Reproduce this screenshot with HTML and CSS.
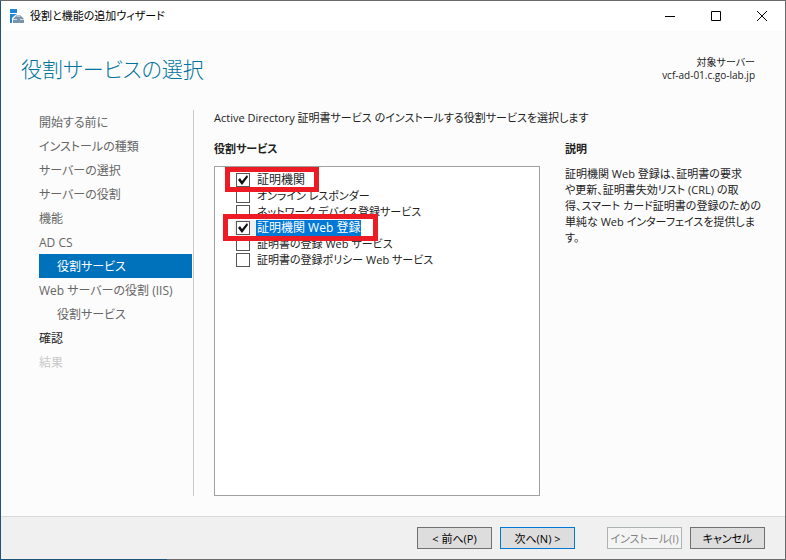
FILE: index.html
```html
<!DOCTYPE html>
<html lang="ja">
<head>
    <meta charset="UTF-8">
    <meta name="viewport" content="width=device-width, initial-scale=1.0">
    <title>役割と機能の追加ウィザード</title>
    <link rel="stylesheet" href="styles.css">
</head>
<body>
    <div class="window">
        <div class="titlebar">
            <svg class="app-icon" width="16" height="16" viewBox="0 0 16 16" aria-hidden="true">
                <path d="M1 1h7v4H1zM1 6h7L5 8 3 10v5H1z" fill="#1e88d8"/>
                <path d="M7 10V8h5v2" fill="none" stroke="#6d8ba3"/>
                <path d="M4 11l2-2h7l2 2v4H4z" fill="#7895ab"/>
                <path d="M4 11.5h4m3 0h4" stroke="#d5dee6"/>
            </svg>
            <span class="title">役割と機能の追加ウィザード</span>
            <div class="window-controls">
                <button type="button" aria-label="最小化">
                    <svg width="10" height="10" viewBox="0 0 10 10"><path d="M0 5.5h10" stroke="#000"/></svg>
                </button>
                <button type="button" aria-label="最大化">
                    <svg width="10" height="10" viewBox="0 0 10 10"><path d="M.5.5h9v9h-9z" fill="none" stroke="#000"/></svg>
                </button>
                <button type="button" aria-label="閉じる">
                    <svg width="10" height="10" viewBox="0 0 10 10"><path d="M0 0l10 10M10 0L0 10" stroke="#000"/></svg>
                </button>
            </div>
        </div>

        <header class="page-header">
            <h1>役割サービスの選択</h1>
            <div class="target">対象サーバー<br>vcf-ad-01.c.go-lab.jp</div>
        </header>

        <div class="content">
            <nav class="steps">
                <a href="#">開始する前に</a>
                <a href="#">インストールの種類</a>
                <a href="#">サーバーの選択</a>
                <a href="#">サーバーの役割</a>
                <a href="#">機能</a>
                <a href="#">AD CS</a>
                <a href="#" class="sub current">役割サービス</a>
                <a href="#">Web サーバーの役割 (IIS)</a>
                <a href="#" class="sub">役割サービス</a>
                <a href="#" class="next">確認</a>
                <a class="disabled">結果</a>
            </nav>

            <main class="main">
                <p class="intro">Active Directory 証明書サービス のインストールする役割サービスを選択します</p>
                <div class="columns">
                    <section class="roles">
                        <h2>役割サービス</h2>
                        <div class="role-list">
                            <label class="role"><input type="checkbox" checked><span>証明機関</span></label>
                            <label class="role"><input type="checkbox"><span>オンライン レスポンダー</span></label>
                            <label class="role"><input type="checkbox"><span>ネットワーク デバイス登録サービス</span></label>
                            <label class="role selected"><input type="checkbox" checked><span>証明機関 Web 登録</span></label>
                            <label class="role"><input type="checkbox"><span>証明書の登録 Web サービス</span></label>
                            <label class="role"><input type="checkbox"><span>証明書の登録ポリシー Web サービス</span></label>
                            <div class="marker marker-ca"></div>
                            <div class="marker marker-web"></div>
                        </div>
                    </section>
                    <section class="description">
                        <h2>説明</h2>
                        <p>証明機関 Web 登録は、証明書の要求<br>や更新、証明書失効リスト (CRL) の取<br>得、スマート カード証明書の登録のための<br>単純な Web インターフェイスを提供しま<br>す。</p>
                    </section>
                </div>
            </main>
        </div>

        <footer class="footer">
            <button type="button" class="btn">&lt; 前へ(P)</button>
            <button type="button" class="btn btn-default">次へ(N) &gt;</button>
            <button type="button" class="btn btn-install" disabled>インストール(I)</button>
            <button type="button" class="btn">キャンセル</button>
        </footer>
    </div>
</body>
</html>
```

FILE: styles.css
```css
* {
    box-sizing: border-box;
}

body {
    margin: 0;
    font-family: "Open Sans", "Noto Sans CJK JP", sans-serif;
    font-size: 12px;
    line-height: 16px;
    font-feature-settings: "palt";
    color: #222;
}

button {
    font: inherit;
    font-feature-settings: inherit;
}

h1, h2, p {
    margin: 0;
}

/* 1px window edge, drawn by the background */
.window {
    display: flex;
    flex-direction: column;
    min-height: 100vh;
    padding: 0 1px 1px;
    border-top: 1px solid #6b696b;
    background: linear-gradient(to right, #1b5577 167px, #6b696b 167px);
}

.titlebar {
    display: flex;
    align-items: center;
    height: 30px;
    padding-left: 8px;
    background: #fff;
    color: #000;
}

.title {
    flex: 1;
    margin-left: 5px;
    font-size: 11px;
    white-space: nowrap;
}

.window-controls {
    display: flex;
}

.window-controls button {
    display: flex;
    align-items: center;
    justify-content: center;
    width: 46px;
    height: 30px;
    padding: 0;
    border: none;
    background: none;
}

.page-header {
    display: flex;
    justify-content: space-between;
    height: 79px;
    padding: 22px 30px 0 20px;
    background: #fcfcfc;
}

h1 {
    font-size: 21px;
    line-height: 32px;
    font-weight: 300;
    color: #00739c;
}

.target {
    padding-top: 3px;
    font-size: 10px;
    line-height: 13px;
    text-align: right;
}

.content {
    display: flex;
    flex: 1;
    padding: 0 19px 20px 38px;
    background: #fcfcfc;
}

.steps {
    width: 155px;
    flex-shrink: 0;
    padding-right: 1px;
    border-right: 1px solid #c8c8c8;
    line-height: 22px;
}

.steps a {
    display: block;
    padding-top: 2px;
    color: #666;
    text-decoration: none;
    white-space: nowrap;
}

.steps .sub {
    padding-left: 18px;
}

.steps .current {
    background: #0072bc;
    color: #fff;
}

.steps .next {
    color: #222;
}

.steps .disabled {
    color: #c8c8c8;
}

.main {
    display: flex;
    flex-direction: column;
    flex: 1;
    padding-left: 20px;
}

.intro {
    margin-bottom: 15px;
    font-size: 11px;
}

.columns {
    display: flex;
    flex: 1;
    gap: 25px;
}

h2 {
    margin-bottom: 9px;
    font-size: 11px;
    font-weight: bold;
}

.roles {
    display: flex;
    flex-direction: column;
    flex: 326;
}

.role-list {
    position: relative;
    flex: 1;
    padding: 5px 0 0 19px;
    border: 1px solid #a0a0a0;
    background: #fff;
}

.role {
    display: flex;
    align-items: center;
    height: 16px;
    font-size: 11px;
    white-space: nowrap;
}

.role input {
    appearance: none;
    flex-shrink: 0;
    width: 14px;
    height: 14px;
    margin: 0 6px 0 2px;
    border: 1px solid #555;
    background: #fff;
}

.role input:checked::after {
    content: "";
    display: block;
    width: 12px;
    height: 12px;
    background: #111;
    clip-path: polygon(1px 6px, 3px 4px, 5px 7px, 10px 1px, 11px 3px, 5px 11px);
}

.role span {
    padding: 0 1px;
}

.role input:checked + span {
    font-size: 12px;
}

.role.selected {
    background: linear-gradient(to right, #f0f0f0 22px, transparent 22px);
}

.role.selected span {
    background: #0078d7;
    color: #fff;
}

/* red frames around the services to pick */
.marker {
    position: absolute;
    border: 5px solid #ed1c24;
}

.marker-ca {
    top: 0;
    left: 10px;
    width: 94px;
    height: 25px;
}

.marker-web {
    top: 47px;
    left: 8px;
    width: 155px;
    height: 27px;
}

.description {
    flex: 201;
    min-width: 0;
}

.description p {
    font-size: 11px;
    white-space: nowrap;
}

.footer {
    display: flex;
    justify-content: flex-end;
    gap: 8px;
    padding: 10px 20px 10px 0;
    border-top: 1px solid #d9d9d9;
    background: #f0f0f0;
}

.btn {
    width: 75px;
    height: 22px;
    padding: 2px 0 0;
    border: 1px solid #707070;
    background: #ddd;
    color: #000;
    font-size: 11px;
    white-space: nowrap;
}

.btn-default {
    border-color: #0078d7;
}

.btn-install {
    margin-left: 24px;
    border-color: #adb2b5;
    background: #f4f4f4;
    color: #838383;
}
```
